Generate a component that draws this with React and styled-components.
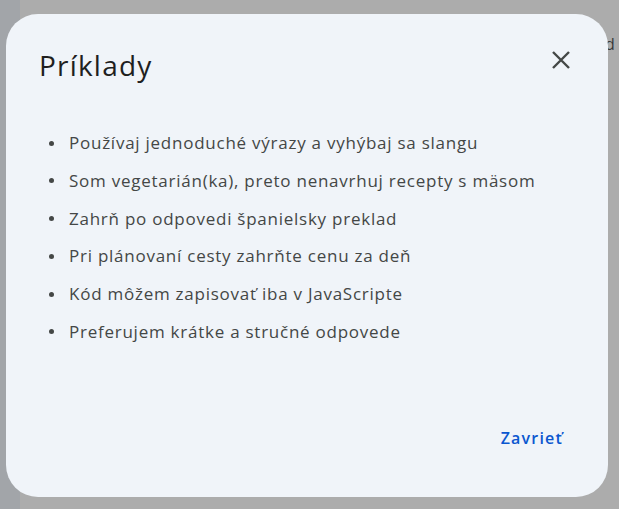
import React from "react";
import styled, { createGlobalStyle } from "styled-components";

const Global = createGlobalStyle`
  html, body { margin: 0; padding: 0; }
  body { width: 619px; height: 509px; overflow: hidden; background: #acacac; font-family: "Open Sans", "Noto Sans", sans-serif; }
`;

const Page = styled.div`
  position: relative;
  width: 619px;
  height: 509px;
  display: flex;
  background: #acacac;
`;

const SideStrip = styled.div`
  width: 20px;
  height: 100%;
  background: #a2a5a9;
`;

const BehindText = styled.span`
  position: absolute;
  left: 605px;
  top: 33px;
  font-size: 16px;
  color: #3a3a3a;
`;

const Dialog = styled.div`
  position: absolute;
  left: 6px;
  top: 14px;
  width: 602px;
  height: 483px;
  box-sizing: border-box;
  background: #f0f4f9;
  border-radius: 32px;
  display: flex;
  flex-direction: column;
  padding: 32px 35px 0 33px;
`;

const Header = styled.div`
  display: flex;
  align-items: center;
  justify-content: space-between;
`;

const Title = styled.h2`
  margin: 0;
  font-size: 28px;
  font-weight: 400;
  line-height: 38px;
  letter-spacing: 1.2px;
  color: #1f1f1f;
`;

const CloseButton = styled.button`
  border: 0;
  background: transparent;
  padding: 0;
  width: 24px;
  height: 24px;
  display: flex;
  align-items: center;
  justify-content: center;
  cursor: pointer;
  margin-top: -11px;
`;

const List = styled.ul`
  list-style: none;
  margin: 47px 0 0 0;
  padding: 0 0 0 10px;
  display: flex;
  flex-direction: column;
  gap: 13.8px;
`;

const Item = styled.li`
  display: flex;
  align-items: center;
  font-size: 17px;
  line-height: 24px;
  letter-spacing: 0.75px;
  color: #444746;
`;

const Dot = styled.span`
  width: 5px;
  height: 5px;
  border-radius: 50%;
  background: #444746;
  margin-right: 15px;
  flex: none;
`;

const Footer = styled.div`
  margin-top: auto;
  display: flex;
  justify-content: flex-end;
  padding-bottom: 40px;
`;

const TextButton = styled.button`
  border: 0;
  background: transparent;
  font-family: inherit;
  font-size: 16px;
  font-weight: 600;
  letter-spacing: 1.2px;
  color: #0b57d0;
  padding: 8px 8px;
  margin-right: 2px;
  cursor: pointer;
`;

const items = [
  "Používaj jednoduché výrazy a vyhýbaj sa slangu",
  "Som vegetarián(ka), preto nenavrhuj recepty s mäsom",
  "Zahrň po odpovedi španielsky preklad",
  "Pri plánovaní cesty zahrňte cenu za deň",
  "Kód môžem zapisovať iba v JavaScripte",
  "Preferujem krátke a stručné odpovede",
];

export default function App() {
  return (
    <>
      <Global />
      <Page>
        <SideStrip />
        <BehindText>d</BehindText>
        <Dialog>
          <Header>
            <Title>Príklady</Title>
            <CloseButton aria-label="Zavrieť">
              <svg width="20" height="20" viewBox="0 0 20 20">
                <path d="M2 2 L18 18 M18 2 L2 18" stroke="#444746" strokeWidth="2.4" strokeLinecap="butt" />
              </svg>
            </CloseButton>
          </Header>
          <List>
            {items.map((t) => (
              <Item key={t}>
                <Dot />
                {t}
              </Item>
            ))}
          </List>
          <Footer>
            <TextButton>Zavrieť</TextButton>
          </Footer>
        </Dialog>
      </Page>
    </>
  );
}
